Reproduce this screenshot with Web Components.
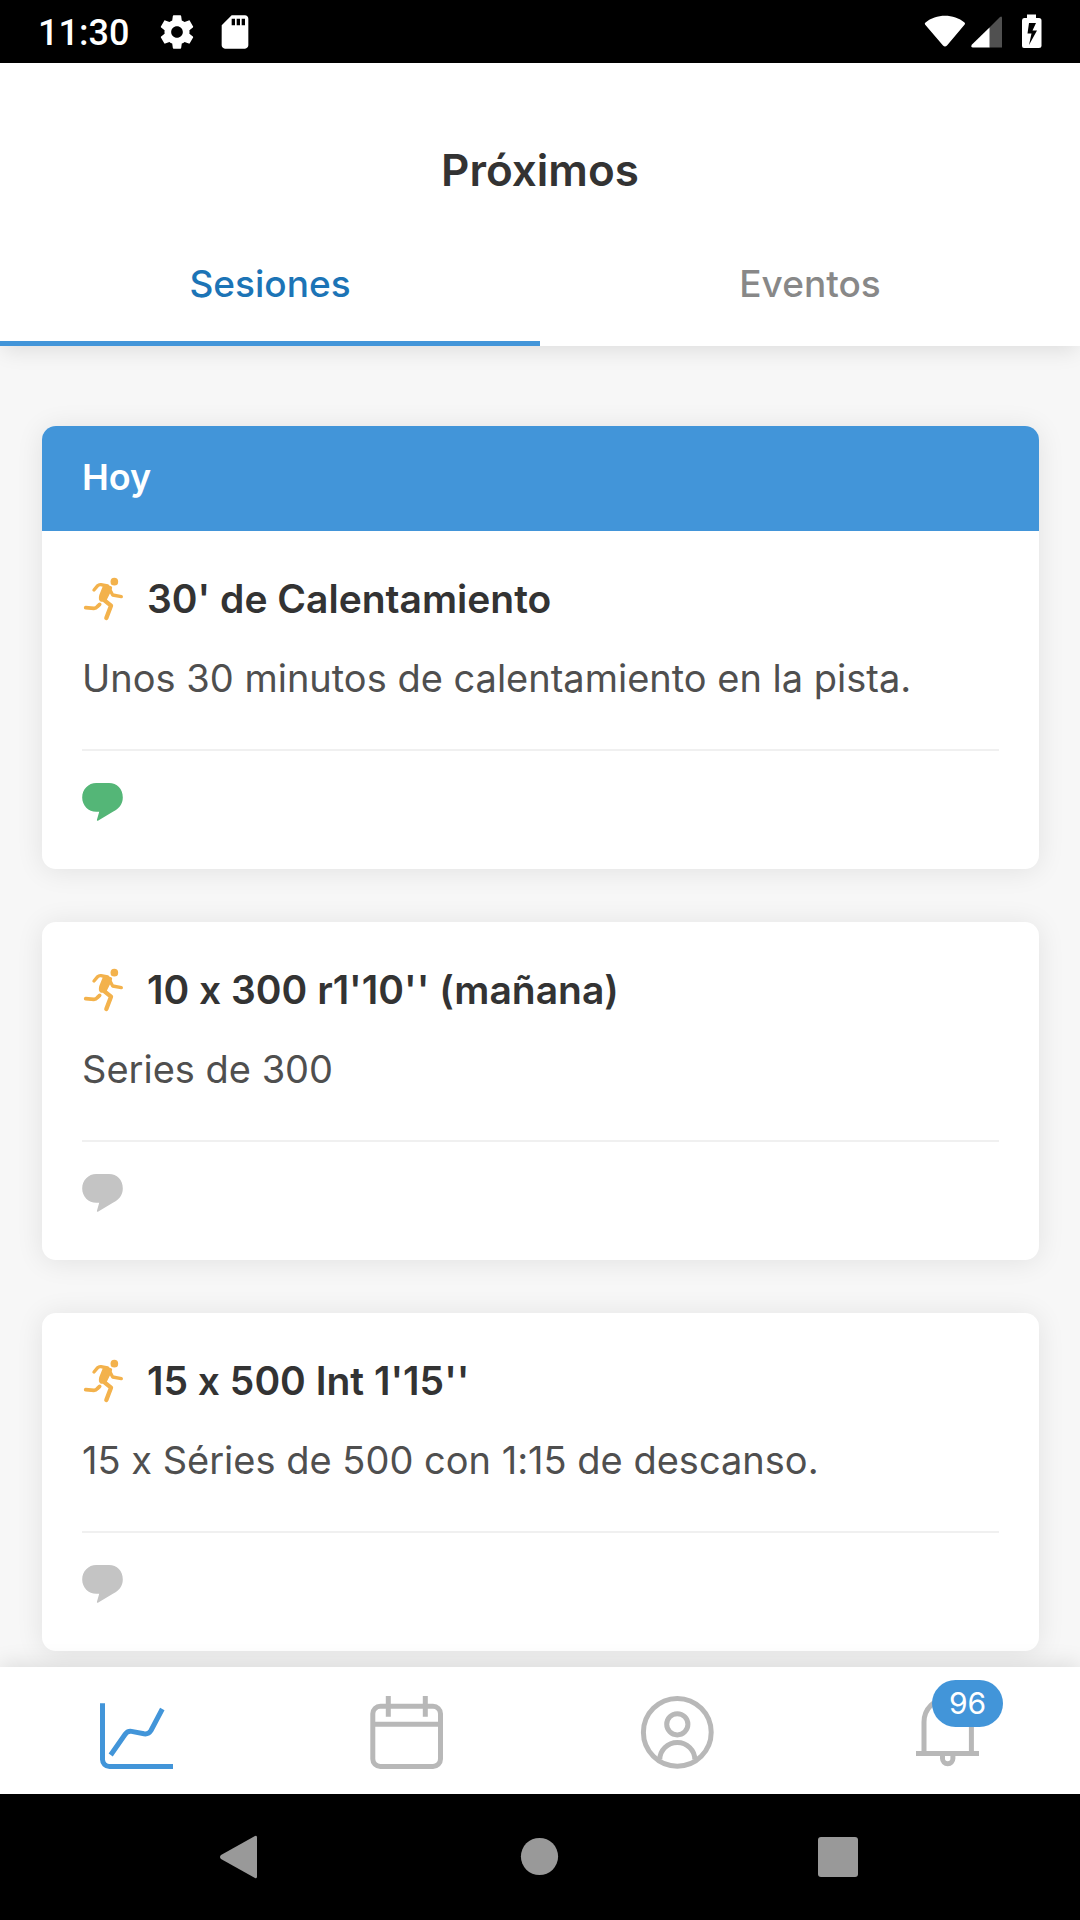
<!DOCTYPE html>
<html lang="es">
<head>
<meta charset="utf-8">
<meta name="viewport" content="width=device-width, initial-scale=1">
<title>Próximos</title>
<style>
  html, body { margin: 0; height: 100%; }
  body { font-family: Inter, "Noto Sans", sans-serif; font-feature-settings: "calt" 0; color: #333; background: #f7f7f7; }
</style>
</head>
<body>
<training-app></training-app>

<script>
const define = (name, html, setup) => {
  const template = document.createElement('template');
  template.innerHTML = '<style>*{box-sizing:border-box}svg{display:block;flex:none}button{font:inherit;font-feature-settings:inherit;border:0;background:none;padding:0;margin:0;cursor:pointer}</style>' + html;
  customElements.define(name, class extends HTMLElement {
    connectedCallback() {
      if (this.shadowRoot) return;
      this.attachShadow({ mode: 'open' }).append(template.content.cloneNode(true));
      if (setup) setup(this, this.shadowRoot);
    }
  });
};

define('status-bar', `
<style>
  :host { display: flex; align-items: center; justify-content: space-between; height: 63px; padding: 0 36px 0 38px; background: #000; color: #fff; flex: none; }
  .group { display: flex; align-items: center; }
  time { font: 500 36px/42px Roboto, sans-serif; margin-right: 28px; padding-top: 2px; }
  .left svg + svg { margin-left: 18px; }
</style>
<div class="group left">
  <time>11:30</time>
  <svg width="40" height="40" viewBox="0 0 24 24" fill="#fff"><path d="M19.43 12.98c.04-.32.07-.64.07-.98s-.03-.66-.07-.98l2.11-1.65c.19-.15.24-.42.12-.64l-2-3.46c-.12-.22-.39-.3-.61-.22l-2.49 1c-.52-.4-1.08-.73-1.69-.98l-.38-2.65C14.46 2.18 14.25 2 14 2h-4c-.25 0-.46.18-.49.42l-.38 2.65c-.61.25-1.17.59-1.69.98l-2.49-1c-.23-.09-.49 0-.61.22l-2 3.46c-.13.22-.07.49.12.64l2.11 1.65c-.04.32-.07.65-.07.98s.03.66.07.98l-2.11 1.65c-.19.15-.24.42-.12.64l2 3.46c.12.22.39.3.61.22l2.49-1c.52.4 1.08.73 1.69.98l.38 2.65c.03.24.24.42.49.42h4c.25 0 .46-.18.49-.42l.38-2.65c.61-.25 1.17-.59 1.69-.98l2.49 1c.23.09.49 0 .61-.22l2-3.46c.12-.22.07-.49-.12-.64l-2.11-1.65zM12 15.500c-1.930 0-3.500-1.570-3.500-3.500s1.570-3.500 3.500-3.500 3.500 1.570 3.500 3.500-1.570 3.500-3.500 3.500z"/></svg>
  <svg width="40" height="40" viewBox="0 0 24 24" fill="#fff"><path d="M18 2h-8L4.020 8 4 20c0 1.100.9 2 2 2h12c1.100 0 2-.9 2-2V4c0-1.100-.9-2-2-2zm-6 6h-2V4h2v4zm3 0h-2V4h2v4zm3 0h-2V4h2v4z"/></svg>
</div>
<svg width="122" height="40" viewBox="0 0 122 40">
  <path fill="#fff" d="M3.500 10.500C14 1.500 32 1.500 42.500 10.500q1 1 .2 2L25 33.500q-2 2-4 0L3 12.500q-.7-1 .5-2z"/>
  <path fill="#505050" d="M67 16 78 5q2-1.500 2 1v29.500H67z"/>
  <path fill="#fff" d="M67.500 15.500V35.500H51q-3-.5-1-3z"/>
  <path fill="#fff" fill-rule="evenodd" d="M105 2.500h9v3.500h3q2.500 0 2.500 2.500V34q0 2-2.500 2h-15q-2 0-2-2V8.500q0-2.500 2-2.500h3zM107 11l-1.500 10.500h4L107 33l8-14.500h-4.500l3.500-7.500z"/>
</svg>`);

define('page-header', `
<style>
  :host { display: block; flex: none; background: #fff; position: relative; z-index: 1; box-shadow: 0 8px 20px -3px rgba(0,0,0,.1); }
  h1 { margin: 0; padding: 79px 0 28px; font-size: 44px; line-height: 56px; font-weight: 600; text-align: center; }
  div { display: flex; }
</style>
<h1><slot name="title"></slot></h1>
<div role="tablist"><slot></slot></div>`);

define('page-tab', `
<style>
  :host { display: flex; flex: 1; }
  button { flex: 1; padding: 34px 0 33px; line-height: 48px; font-size: 37px; font-weight: 500; color: #888; border-bottom: 5px solid transparent; }
  :host([selected]) button { color: #1c74b6; border-color: #4295d9; }
</style>
<button role="tab"><slot></slot></button>`, (host, root) => {
  root.querySelector('button').setAttribute('aria-selected', host.hasAttribute('selected'));
});

define('session-card', `
<style>
  :host { display: block; background: #fff; border-radius: 14px; overflow: hidden; box-shadow: 0 2px 28px rgba(0,0,0,.09); flex: none; }
  header { background: #4295d9; color: #fff; font-size: 36px; font-weight: 600; line-height: 45px; padding: 29px 40px 31px; }
  :host(:not([day])) header { display: none; }
  .body { padding: 40px 40px 0; }
  .head { display: flex; align-items: center; gap: 21px; }
  h2 { margin: 0; font-size: 39px; line-height: 56px; font-weight: 600; }
  p { margin: 27px 0 47px; font-size: 38px; line-height: 48px; color: #4f4f4f; white-space: nowrap; }
  .foot { border-top: 2px solid #f0f0f0; padding: 32px 0 48px; display: flex; }
  button { color: #c4c4c4; }
  :host([commented]) button { color: #54b677; }
</style>
<header></header>
<div class="body">
  <div class="head">
    <svg width="44" height="46" viewBox="66 48 132 138" fill="none" stroke="#f3b24c" stroke-width="10" stroke-linecap="round" stroke-linejoin="round">
      <circle cx="163" cy="65" r="11.500" fill="#f3b24c" stroke="none"/>
      <path d="M102 90 113 77Q117 73 123 74L143 78"/>
      <path d="M147 84 158 105 184 110"/>
      <path d="M77 143 102 145Q108 145 112 140L119 133" stroke-width="11"/>
      <path d="M126 115 153 137 139 174" stroke-width="13"/>
      <path fill="#f3b24c" stroke-width="9" d="M134 77 152 83 148 94 136 118 124 121Q119 118 122 107z"/>
    </svg>
    <h2><slot></slot></h2>
  </div>
  <p><slot name="description"></slot></p>
  <div class="foot">
    <button aria-label="Comentarios"><svg width="41" height="38" viewBox="65 158 124 116" fill="currentColor"><path d="M108 158H147C171 158 189 176 189 202 189 224 176 236 160 245L113 273Q109 274 110 270L117 246H108C84 246 65 226 65 202 65 177 84 158 108 158Z"/></svg></button>
  </div>
</div>`, (host, root) => {
  root.querySelector('header').textContent = host.getAttribute('day') || '';
});

define('nav-item', `
<style>
  :host { display: flex; flex: 1; justify-content: center; color: #b8b8b8; }
  :host([active]) { color: #4295d9; }
  button { position: relative; display: block; color: inherit; }
  span { position: absolute; left: 27px; top: -12px; width: 71px; border-radius: 24px; background: #4295d9; color: #fff; font-size: 30px; line-height: 47px; text-align: center; }
  :host(:not([badge])) span { display: none; }
  svg { fill: none; stroke: currentColor; stroke-width: 5; }
</style>
<button><svg width="80" height="80" viewBox="0 0 80 80"></svg><span></span></button>`, (host, root) => {
  const shapes = {
    chart: '<path d="M7.500 11.300V67.500a7 7 0 0 0 7 7H78"/><path d="M15.700 63 30 42.500Q32.500 38.800 36.500 39.400L49 41.800Q53.500 42.500 56 38.500L67.300 17"/>',
    calendar: '<rect x="7.800" y="14.200" width="67.700" height="60.300" rx="7.500"/><path d="M8 32.300H75M23.300 4V24.700M60.300 4V24.700"/>',
    user: '<circle cx="42.300" cy="40.300" r="33.900"/><circle cx="42.300" cy="32.300" r="10.600"/><path d="M24.800 67.500a17.500 17 0 0 1 35 0"/>',
    bell: '<path d="M19 60V30a23.700 23.700 0 0 1 47.400 0V60M11 61.500H74M37.500 63V66.500a5.200 5.200 0 0 0 10.400 0V63"/>'
  };
  root.querySelector('svg').innerHTML = shapes[host.getAttribute('icon')];
  root.querySelector('span').textContent = host.getAttribute('badge') || '';
  root.querySelector('button').setAttribute('aria-label', host.getAttribute('label'));
});

define('bottom-nav', `
<style>
  :host { display: block; flex: none; background: #fff; position: relative; z-index: 1; box-shadow: 0 -4px 20px rgba(0,0,0,.1); }
  nav { display: flex; padding: 25px 0 22px; }
</style>
<nav><slot></slot></nav>`);

define('system-nav', `
<style>
  :host { display: flex; flex: none; background: #000; padding: 0 90px; position: relative; z-index: 2; }
  button { flex: 1; display: flex; justify-content: center; padding: 41px 0; }
  svg { fill: #999; }
</style>
<button aria-label="Atrás"><svg width="44" height="44" viewBox="0 0 44 44"><path d="M37 1q2-1 2 1.500v39q0 2.500-2 1.500L3 24q-2-2 0-4z"/></svg></button>
<button aria-label="Inicio"><svg width="44" height="44" viewBox="0 0 44 44"><circle cx="21.500" cy="21.500" r="18.600"/></svg></button>
<button aria-label="Recientes"><svg width="44" height="44" viewBox="0 0 44 44"><rect y="2" width="40" height="40" rx="3"/></svg></button>`);

define('training-app', `
<style>
  :host { display: flex; flex-direction: column; height: 100vh; }
  main { flex: 1; min-height: 0; overflow: hidden; display: flex; flex-direction: column; gap: 53px; padding: 80px 41px 16px 42px; }
</style>
<status-bar></status-bar>
<page-header>
  <span slot="title">Próximos</span>
  <page-tab selected>Sesiones</page-tab>
  <page-tab>Eventos</page-tab>
</page-header>
<main>
  <session-card day="Hoy" commented>30' de Calentamiento<span slot="description">Unos 30 minutos de calentamiento en la pista.</span></session-card>
  <session-card>10 x 300 r1'10'' (mañana)<span slot="description">Series de 300</span></session-card>
  <session-card>15 x 500 Int 1'15''<span slot="description">15 x Séries de 500 con 1:15 de descanso.</span></session-card>
</main>
<bottom-nav>
  <nav-item icon="chart" label="Progreso" active></nav-item>
  <nav-item icon="calendar" label="Calendario"></nav-item>
  <nav-item icon="user" label="Perfil"></nav-item>
  <nav-item icon="bell" label="Notificaciones" badge="96"></nav-item>
</bottom-nav>
<system-nav></system-nav>`);
</script>
</body>
</html>
